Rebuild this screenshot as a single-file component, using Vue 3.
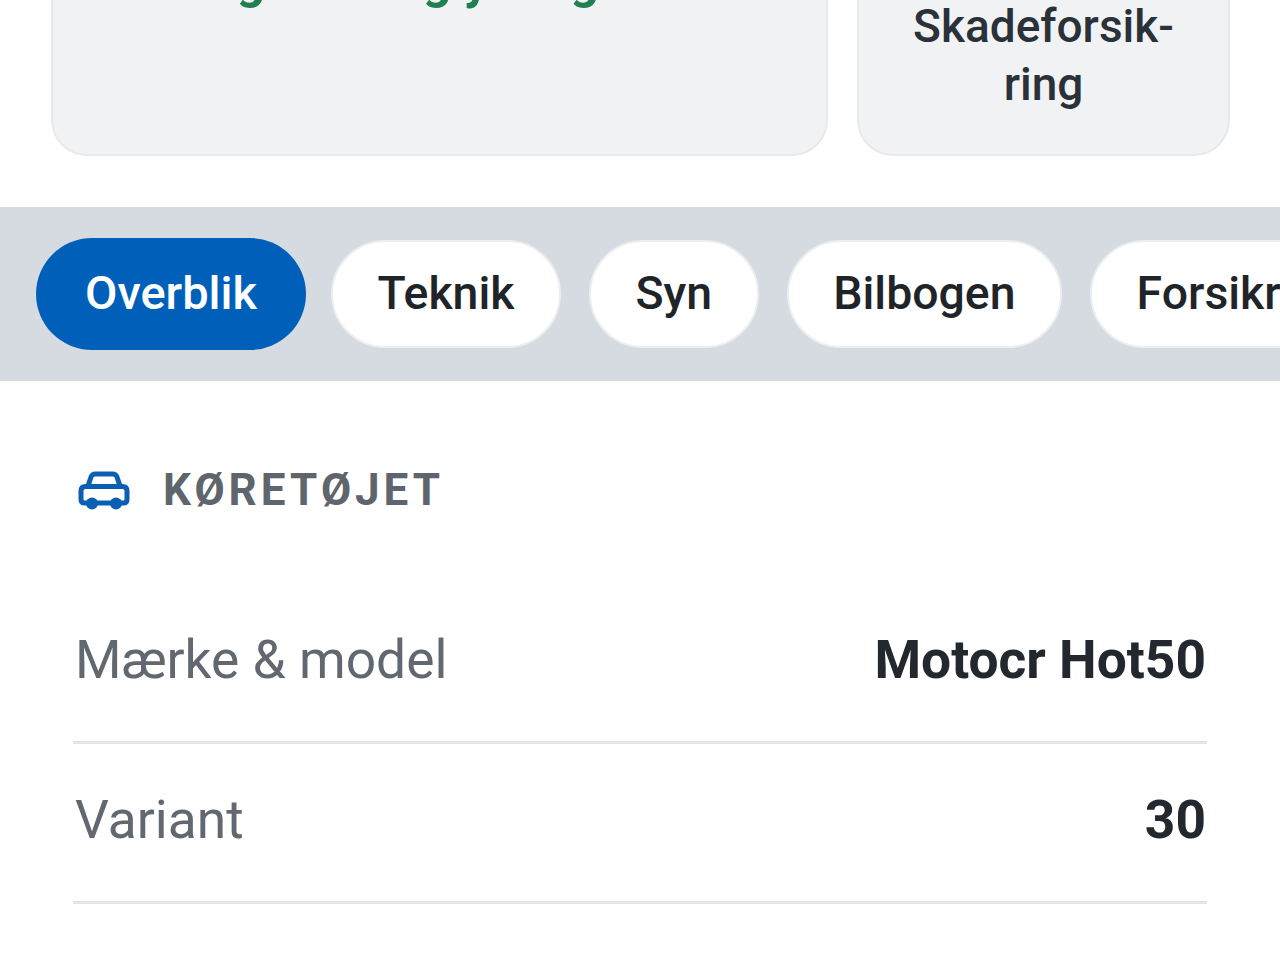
<script setup>
const tabs = ['Overblik', 'Teknik', 'Syn', 'Bilbogen', 'Forsikring']
const rows = [
  { label: 'Mærke & model', value: 'Motocr Hot50' },
  { label: 'Variant', value: '30' },
]
</script>

<template>
  <div class="page">
    <section class="cards">
      <div class="card wide"><span class="status">Ingen fri og ydeligere.</span></div>
      <div class="card narrow"><span class="kind">Skadeforsik-<br />ring</span></div>
    </section>
    <nav class="tabs">
      <span v-for="(t, i) in tabs" :key="t" class="tab" :class="{ active: i === 0 }">{{ t }}</span>
    </nav>
    <section class="vehicle">
      <h2 class="heading">
        <svg class="car" viewBox="0 0 52 40" fill="none" stroke="#0a5fb4" stroke-width="5" stroke-linejoin="round">
          <path d="M10 15 13 6Q14 3 17.500 3H34.500Q38 3 39 6L42 15" />
          <path d="M3 20Q3 15.500 7.500 15.500H44.500Q49 15.500 49 20V28.500Q49 32 45.500 32H6.500Q3 32 3 28.500Z" />
          <circle cx="14" cy="32.500" r="6" fill="#0a5fb4" stroke="none" />
          <circle cx="38" cy="32.500" r="6" fill="#0a5fb4" stroke="none" />
        </svg>
        <span>KØRETØJET</span>
      </h2>
      <div v-for="r in rows" :key="r.label" class="row">
        <span class="label">{{ r.label }}</span>
        <span class="value">{{ r.value }}</span>
      </div>
    </section>
  </div>
</template>

<style scoped>
.page {
  width: 1280px;
  height: 960px;
  overflow: hidden;
  background: #fff;
  font-family: Roboto, "Liberation Sans", sans-serif;
}
.cards {
  display: grid;
  grid-template-columns: 777px 373px;
  gap: 29px;
  padding: 0 51px;
  height: 207px;
  box-sizing: border-box;
}
.card {
  height: 156px;
  box-sizing: border-box;
  background: #f1f2f4;
  border: 2px solid #e7e9eb;
  border-top: 0;
  border-radius: 0 0 36px 36px;
  text-align: center;
  overflow: hidden;
}
.status {
  display: block;
  margin-top: -47px;
  font-size: 50px;
  line-height: 56px;
  font-weight: 700;
  color: #1f8050;
  white-space: nowrap;
}
.kind {
  display: block;
  margin-top: -3px;
  font-size: 46px;
  line-height: 58px;
  font-weight: 500;
  color: #2a3138;
}
.tabs {
  display: flex;
  align-items: center;
  gap: 27.700px;
  height: 174px;
  padding-left: 36px;
  background: #d6dbe1;
  overflow: hidden;
}
.tab {
  flex: none;
  height: 108px;
  box-sizing: border-box;
  display: flex;
  align-items: center;
  padding: 0 44.700px 3px;
  border-radius: 54px;
  background: #fff;
  border: 2px solid #eceef0;
  font-size: 46.400px;
  font-weight: 500;
  color: #1f2429;
}
.tab.active {
  height: 112px;
  padding: 0 49px 3px;
  margin-right: -3px;
  border-radius: 56px;
  border: 0;
  background: #0060b9;
  color: #fff;
  font-size: 47px;
}
.vehicle {
  padding: 0 73px;
}
.heading {
  display: flex;
  align-items: center;
  gap: 33px;
  margin: 0;
  padding: 86px 0 0 5px;
  height: 47px;
  font-size: 44px;
  font-weight: 700;
  letter-spacing: 4px;
  line-height: 47px;
  color: #5f656c;
}
.car {
  width: 52px;
  height: 40px;
  flex: none;
}
.row {
  display: flex;
  justify-content: space-between;
  align-items: center;
  height: 160px;
  box-sizing: border-box;
  padding: 0 1px 6px 2px;
  border-bottom: 3px solid #e3e6e9;
}
.heading + .row {
  margin-top: 70px;
}
.label {
  font-size: 53.300px;
  color: #62686f;
}
.value {
  font-size: 53.300px;
  font-weight: 700;
  color: #22282d;
}
</style>
